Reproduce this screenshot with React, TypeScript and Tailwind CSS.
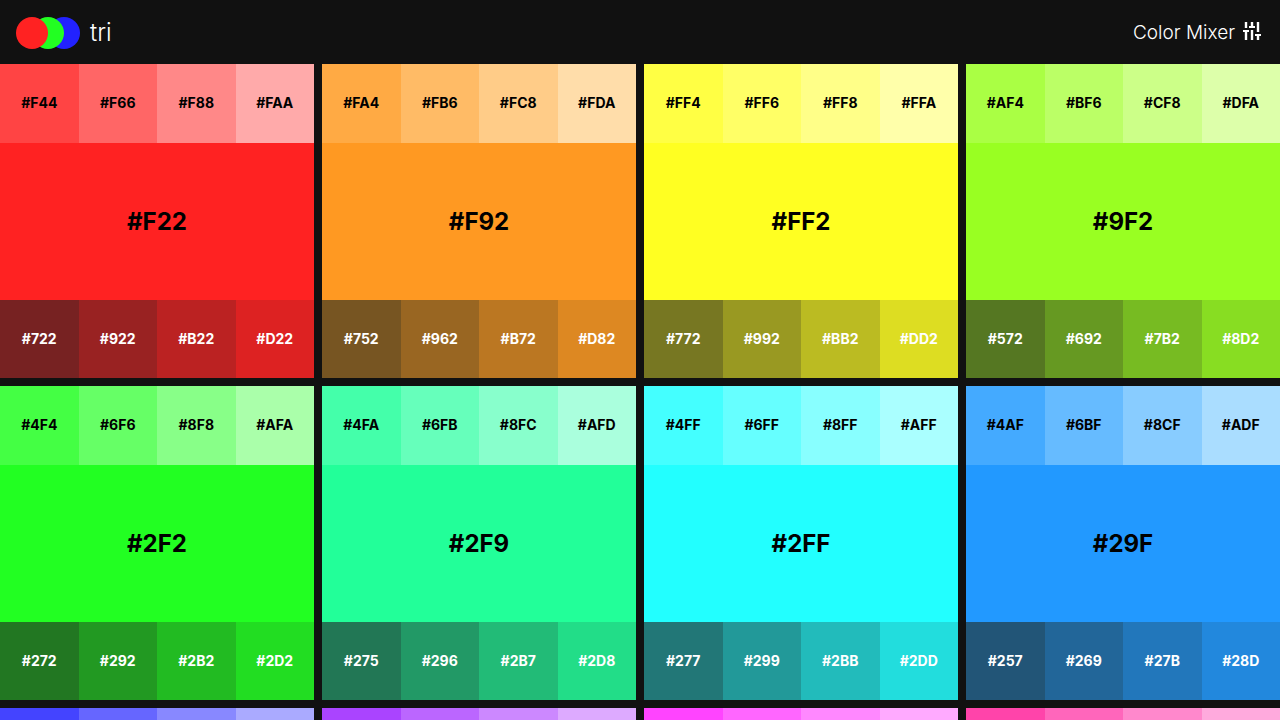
type Family = { base: string; tints: string[]; shades: string[] };

const families: Family[] = [
  {
    base: "bg-[#F22]",
    tints: ["bg-[#F44]", "bg-[#F66]", "bg-[#F88]", "bg-[#FAA]"],
    shades: ["bg-[#722]", "bg-[#922]", "bg-[#B22]", "bg-[#D22]"],
  },
  {
    base: "bg-[#F92]",
    tints: ["bg-[#FA4]", "bg-[#FB6]", "bg-[#FC8]", "bg-[#FDA]"],
    shades: ["bg-[#752]", "bg-[#962]", "bg-[#B72]", "bg-[#D82]"],
  },
  {
    base: "bg-[#FF2]",
    tints: ["bg-[#FF4]", "bg-[#FF6]", "bg-[#FF8]", "bg-[#FFA]"],
    shades: ["bg-[#772]", "bg-[#992]", "bg-[#BB2]", "bg-[#DD2]"],
  },
  {
    base: "bg-[#9F2]",
    tints: ["bg-[#AF4]", "bg-[#BF6]", "bg-[#CF8]", "bg-[#DFA]"],
    shades: ["bg-[#572]", "bg-[#692]", "bg-[#7B2]", "bg-[#8D2]"],
  },
  {
    base: "bg-[#2F2]",
    tints: ["bg-[#4F4]", "bg-[#6F6]", "bg-[#8F8]", "bg-[#AFA]"],
    shades: ["bg-[#272]", "bg-[#292]", "bg-[#2B2]", "bg-[#2D2]"],
  },
  {
    base: "bg-[#2F9]",
    tints: ["bg-[#4FA]", "bg-[#6FB]", "bg-[#8FC]", "bg-[#AFD]"],
    shades: ["bg-[#275]", "bg-[#296]", "bg-[#2B7]", "bg-[#2D8]"],
  },
  {
    base: "bg-[#2FF]",
    tints: ["bg-[#4FF]", "bg-[#6FF]", "bg-[#8FF]", "bg-[#AFF]"],
    shades: ["bg-[#277]", "bg-[#299]", "bg-[#2BB]", "bg-[#2DD]"],
  },
  {
    base: "bg-[#29F]",
    tints: ["bg-[#4AF]", "bg-[#6BF]", "bg-[#8CF]", "bg-[#ADF]"],
    shades: ["bg-[#257]", "bg-[#269]", "bg-[#27B]", "bg-[#28D]"],
  },
  {
    base: "bg-[#22F]",
    tints: ["bg-[#44F]", "bg-[#66F]", "bg-[#88F]", "bg-[#AAF]"],
    shades: ["bg-[#227]", "bg-[#229]", "bg-[#22B]", "bg-[#22D]"],
  },
  {
    base: "bg-[#92F]",
    tints: ["bg-[#A4F]", "bg-[#B6F]", "bg-[#C8F]", "bg-[#DAF]"],
    shades: ["bg-[#527]", "bg-[#629]", "bg-[#72B]", "bg-[#82D]"],
  },
  {
    base: "bg-[#F2F]",
    tints: ["bg-[#F4F]", "bg-[#F6F]", "bg-[#F8F]", "bg-[#FAF]"],
    shades: ["bg-[#727]", "bg-[#929]", "bg-[#B2B]", "bg-[#D2D]"],
  },
  {
    base: "bg-[#F29]",
    tints: ["bg-[#F4A]", "bg-[#F6B]", "bg-[#F8C]", "bg-[#FAD]"],
    shades: ["bg-[#725]", "bg-[#926]", "bg-[#B27]", "bg-[#D28]"],
  },
];

/** "bg-[#F22]" -> "#F22" */
const hexOf = (fill: string) => fill.slice(4, -1);

function Swatch({ fill, text }: { fill: string; text: string }) {
  return (
    <button
      type="button"
      onClick={() => navigator.clipboard?.writeText(hexOf(fill))}
      className={`flex cursor-pointer items-center justify-center ${fill} ${text}`}
    >
      {hexOf(fill)}
    </button>
  );
}

function FamilyCard({ base, tints, shades }: Family) {
  return (
    <section className="grid aspect-square grid-cols-1 grid-rows-[1fr_2fr_1fr]">
      <div className="grid grid-cols-4">
        {tints.map((fill) => (
          <Swatch key={fill} fill={fill} text="text-sm font-bold text-black" />
        ))}
      </div>
      <Swatch fill={base} text="pt-0.5 text-2xl font-bold text-black" />
      <div className="grid grid-cols-4">
        {shades.map((fill) => (
          <Swatch key={fill} fill={fill} text="text-sm font-bold text-white" />
        ))}
      </div>
    </section>
  );
}

function Logo() {
  return (
    <svg viewBox="0 0 64 32" className="h-8 w-16" aria-hidden="true">
      <circle cx="48" cy="16" r="16" fill="#22F" />
      <circle cx="32" cy="16" r="16" fill="#2F2" />
      <circle cx="16" cy="16" r="16" fill="#F22" />
    </svg>
  );
}

function MixerIcon() {
  return (
    <svg
      viewBox="0 0 18 22"
      className="h-[22px] w-[18px]"
      fill="none"
      stroke="currentColor"
      aria-hidden="true"
    >
      <path strokeWidth="2.4" d="M3 0v6M3 9v9M9 0v5M9 8v10M15 0v10M15 13v5" />
      <path strokeWidth="2" d="M0 9h6M6 5h6M12 13h6" />
    </svg>
  );
}

export default function App() {
  return (
    <div className="min-h-screen bg-[#111] font-['Inter',sans-serif] text-white">
      <header className="flex h-16 items-center justify-between px-4 pt-0.5">
        <a href="#" className="flex items-center gap-2.5 text-2xl font-light">
          <Logo />
          tri
        </a>
        <a href="#mixer" className="flex items-center gap-2 pr-[3px] text-[19px] font-light">
          Color Mixer
          <MixerIcon />
        </a>
      </header>
      <main className="grid grid-cols-4 gap-2">
        {families.map((family) => (
          <FamilyCard key={family.base} {...family} />
        ))}
      </main>
    </div>
  );
}
